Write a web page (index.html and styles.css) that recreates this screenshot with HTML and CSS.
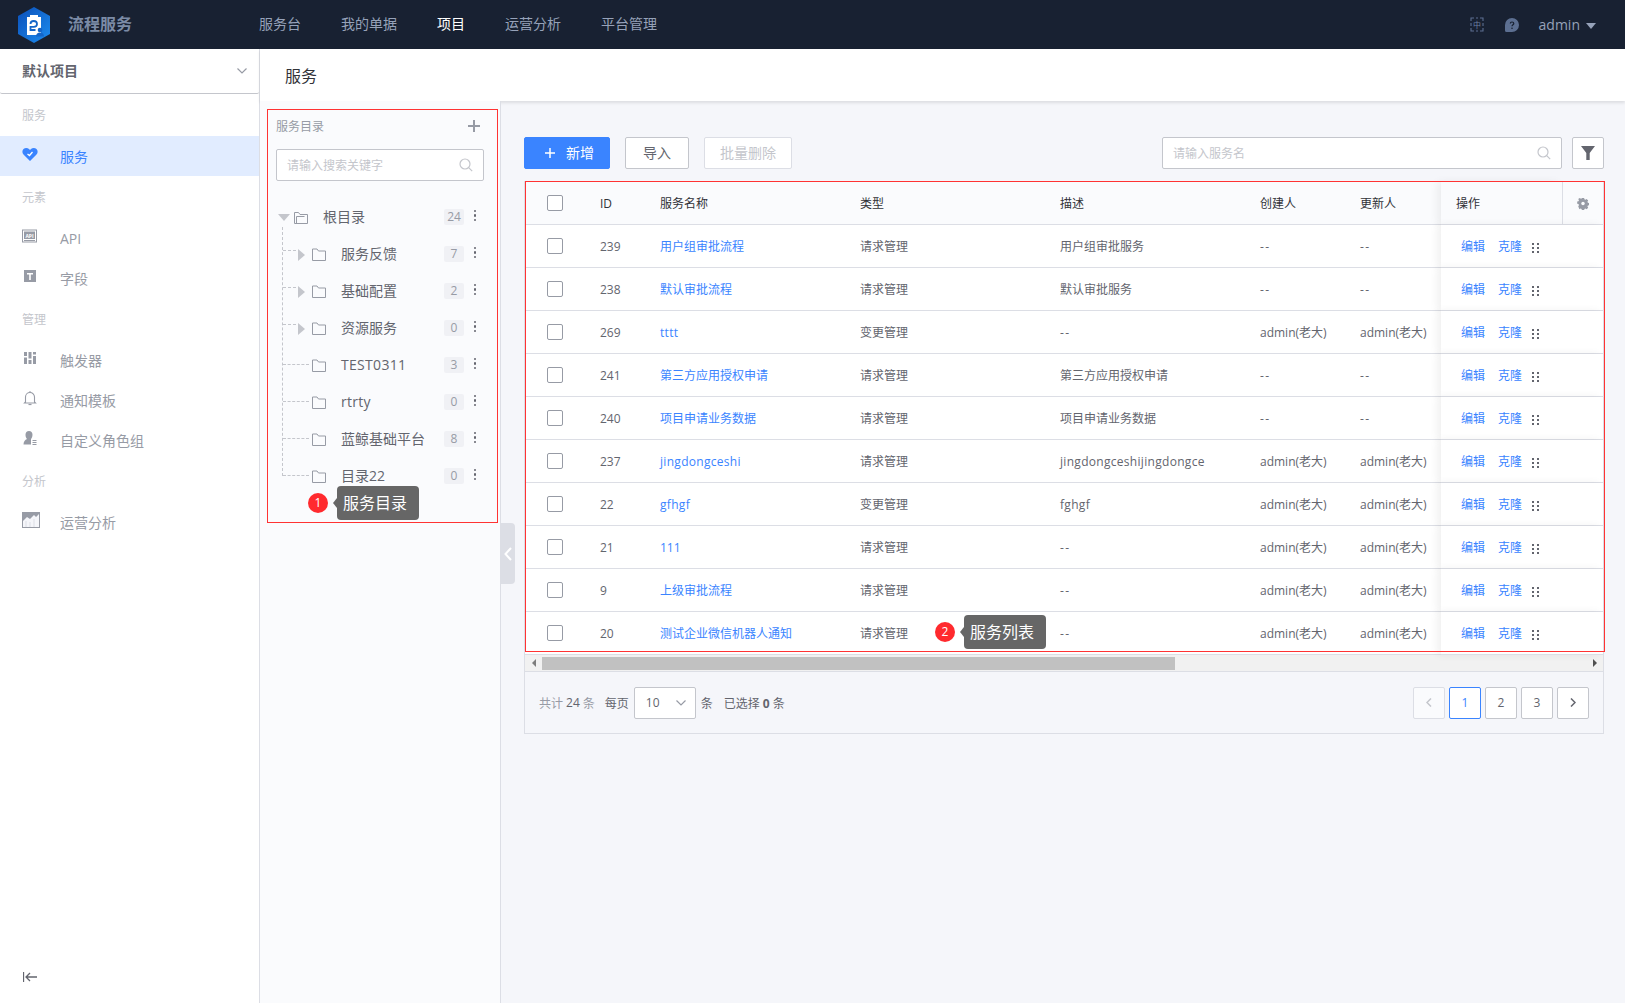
FILE: index.html
```html
<!DOCTYPE html>
<html lang="zh-CN">
<head>
    <meta charset="UTF-8">
    <title>流程服务</title>
    <link rel="stylesheet" href="styles.css">
</head>
<body>

<!-- Top bar -->
<header class="topbar">
    <div class="brand">
        <svg class="brand-logo" viewBox="0 0 32 36">
            <defs>
                <linearGradient id="logo-blue" x1="0" y1="0" x2="1" y2="1">
                    <stop offset="0" stop-color="#0b4fb8"/>
                    <stop offset="1" stop-color="#1d8df0"/>
                </linearGradient>
            </defs>
            <polygon points="16,0 32,9 32,27 16,36 0,27 0,9" fill="url(#logo-blue)"/>
            <path d="M9 10h3V8h8v2h3v18H9z" fill="#fff"/>
            <path d="M12.500 17c0-2 1.400-3 3.200-3s3.300 1 3.300 3-1.500 2.800-3.300 2.800h-3.200v3.200h5" fill="none" stroke="#1465c8" stroke-width="1.800"/>
            <circle cx="22" cy="23" r="2.300" fill="#1465c8"/>
            <path d="M18 29.500c0-2.500 1.800-4 4-4s4 1.500 4 4z" fill="#1465c8"/>
        </svg>
        <span class="brand-name">流程服务</span>
    </div>
    <nav class="topnav">
        <a>服务台</a>
        <a>我的单据</a>
        <a class="active">项目</a>
        <a>运营分析</a>
        <a>平台管理</a>
    </nav>
    <div class="topbar-right">
        <svg class="top-icon lang" viewBox="0 0 14 15">
            <path d="M1 4V1h3M10 1h3v3M1 11v3h3M10 14h3v-3M1 6v3M13 6v3M6 1h2M6 14h2" fill="none" stroke="#5c6f91" stroke-width="1.100"/>
            <text x="7" y="10.500" font-size="8" text-anchor="middle" fill="#6d80a2">中</text>
        </svg>
        <svg class="top-icon help" viewBox="0 0 14 14">
            <path d="M7 0a7 7 0 1 1 0 14H1.500A1.500 1.500 0 0 1 0 12.500V7a7 7 0 0 1 7-7z" fill="#5c6f91"/>
            <path d="M5.300 5.500C5.300 4.500 6 4 7 4s1.800.6 1.800 1.500C8.800 6.800 7 6.800 7 8.300" fill="none" stroke="#182132" stroke-width="1.200"/>
            <circle cx="7" cy="10.200" r=".8" fill="#182132"/>
        </svg>
        <span class="user-name">admin</span>
        <span class="user-caret"></span>
    </div>
</header>

<div class="layout">
    <!-- Left navigation -->
    <aside class="sidebar">
        <div class="project-select">
            <span class="project-name">默认项目</span>
            <svg class="chevron" viewBox="0 0 10 6"><path d="M.5.500 5 5 9.500.500" fill="none" stroke="#979ba5" stroke-width="1.200"/></svg>
        </div>

        <div class="nav-label first">服务</div>
        <a class="nav-item active">
            <svg viewBox="0 0 16 16"><path d="M8 15 1.500 8.500C0 7 0 4.500 1.500 3 3 1.500 5.500 1.500 7 3l1 1 1-1c1.500-1.500 4-1.500 5.500 0s1.500 4 0 5.500z" fill="#3a84ff"/><path d="m5.500 8 2 1.500L10.500 6" fill="none" stroke="#fff" stroke-width="1.300"/></svg>
            <span>服务</span>
        </a>

        <div class="nav-label">元素</div>
        <a class="nav-item">
            <svg viewBox="0 0 16 16"><rect x=".5" y="2" width="14" height="12" fill="none" stroke="#979ba5"/><rect x="2" y="3.500" width="11" height="7.500" fill="#979ba5"/><rect x="2" y="12" width="11" height="1" fill="#979ba5"/><text x="7.500" y="9.500" font-size="5" font-weight="700" text-anchor="middle" fill="#fff">API</text></svg>
            <span>API</span>
        </a>
        <a class="nav-item">
            <svg viewBox="0 0 16 16"><rect x="2" y="2" width="12" height="12" fill="#979ba5"/><path d="M5 5h6v1.500H8.800V12H7.200V6.500H5z" fill="#fff"/></svg>
            <span>字段</span>
        </a>

        <div class="nav-label">管理</div>
        <a class="nav-item">
            <svg viewBox="0 0 16 16"><path d="M2 2h3v4H2zM2 7.500h3V14H2zM6.500 2h3v6.500h-3zM6.500 10h3v4h-3zM11 2h3v2.500h-3zM11 6h3v8h-3z" fill="#979ba5"/></svg>
            <span>触发器</span>
        </a>
        <a class="nav-item">
            <svg viewBox="0 0 16 16"><path d="M3.500 12V7a4.500 4.500 0 0 1 9 0v5l1 1h-11z" fill="none" stroke="#979ba5" stroke-width="1.100"/><path d="M6.500 14.500h3" stroke="#979ba5" stroke-width="1.200"/><path d="M8 1v1.500" stroke="#979ba5"/></svg>
            <span>通知模板</span>
        </a>
        <a class="nav-item">
            <svg viewBox="0 0 16 16"><path d="M7 1c2.200 0 3.500 1.600 3.500 3.800C10.500 7 9.500 8.500 9 9v5.500H1.500c0-3 1.500-4.500 3.500-5.500-.8-.8-1.500-2.200-1.500-4.200C3.500 2.600 4.800 1 7 1z" fill="#979ba5"/><path d="M10.500 10.500h4M10.500 12.500h4M10.500 14.500h4" stroke="#979ba5"/></svg>
            <span>自定义角色组</span>
        </a>

        <div class="nav-label">分析</div>
        <a class="nav-item">
            <svg class="chart-icon" viewBox="0 0 18 16"><rect width="18" height="16" fill="#979ba5"/><path d="M1 15V9l4-4 3 2 4-4 2 2 3-3v13z" fill="#f5f6fa"/><path d="M4 15V9M8 15v-5M12 15V7" stroke="#dcdee5"/></svg>
            <span>运营分析</span>
        </a>

        <svg class="collapse-icon" viewBox="0 0 14 10"><path d="M.5 0v10M14 5H3M7 1 3 5l4 4" fill="none" stroke="#63656e" stroke-width="1.300"/></svg>
    </aside>

    <div class="content">
        <div class="title-bar">服务</div>

        <div class="content-body">
            <!-- Service directory -->
            <section class="dir-panel">
                <div class="dir-box">
                    <div class="dir-title">
                        <span>服务目录</span>
                        <svg class="dir-add" viewBox="0 0 12 12"><path d="M6 0v12M0 6h12" stroke="#979ba5" stroke-width="2"/></svg>
                    </div>
                    <div class="search-box dir-search">
                        <span class="placeholder">请输入搜索关键字</span>
                        <svg class="search-icon" viewBox="0 0 14 14"><circle cx="6" cy="6" r="5" fill="none" stroke="#c4c6cc" stroke-width="1.200"/><path d="m9.700 9.700 3.500 3.500" stroke="#c4c6cc" stroke-width="1.200"/></svg>
                    </div>

                    <div class="tree">
                        <div class="tree-row root">
                            <span class="arrow-down"></span>
                            <svg class="folder" viewBox="0 0 14 13"><path d="M.5 12.500V1.500h4l1.500 2h7.500v9zM2.500 12.500V5.500h8" fill="none" stroke="#979ba5"/></svg>
                            <span class="tree-name">根目录</span>
                            <span class="count">24</span>
                            <span class="more"><i></i><i></i><i></i></span>
                        </div>
                        <div class="tree-children">
                            <div class="tree-row">
                                <span class="arrow-right"></span>
                                <svg class="folder" viewBox="0 0 14 13"><path d="M.5 12.500V1h4.500l1.500 2h7v9.500z" fill="none" stroke="#979ba5"/></svg>
                                <span class="tree-name">服务反馈</span>
                                <span class="count">7</span>
                                <span class="more"><i></i><i></i><i></i></span>
                            </div>
                            <div class="tree-row">
                                <span class="arrow-right"></span>
                                <svg class="folder" viewBox="0 0 14 13"><path d="M.5 12.500V1h4.500l1.500 2h7v9.500z" fill="none" stroke="#979ba5"/></svg>
                                <span class="tree-name">基础配置</span>
                                <span class="count">2</span>
                                <span class="more"><i></i><i></i><i></i></span>
                            </div>
                            <div class="tree-row">
                                <span class="arrow-right"></span>
                                <svg class="folder" viewBox="0 0 14 13"><path d="M.5 12.500V1h4.500l1.500 2h7v9.500z" fill="none" stroke="#979ba5"/></svg>
                                <span class="tree-name">资源服务</span>
                                <span class="count">0</span>
                                <span class="more"><i></i><i></i><i></i></span>
                            </div>
                            <div class="tree-row leaf">
                                <svg class="folder" viewBox="0 0 14 13"><path d="M.5 12.500V1h4.500l1.500 2h7v9.500z" fill="none" stroke="#979ba5"/></svg>
                                <span class="tree-name en">TEST0311</span>
                                <span class="count">3</span>
                                <span class="more"><i></i><i></i><i></i></span>
                            </div>
                            <div class="tree-row leaf">
                                <svg class="folder" viewBox="0 0 14 13"><path d="M.5 12.500V1h4.500l1.500 2h7v9.500z" fill="none" stroke="#979ba5"/></svg>
                                <span class="tree-name en">rtrty</span>
                                <span class="count">0</span>
                                <span class="more"><i></i><i></i><i></i></span>
                            </div>
                            <div class="tree-row leaf">
                                <svg class="folder" viewBox="0 0 14 13"><path d="M.5 12.500V1h4.500l1.500 2h7v9.500z" fill="none" stroke="#979ba5"/></svg>
                                <span class="tree-name">蓝鲸基础平台</span>
                                <span class="count">8</span>
                                <span class="more"><i></i><i></i><i></i></span>
                            </div>
                            <div class="tree-row leaf">
                                <svg class="folder" viewBox="0 0 14 13"><path d="M.5 12.500V1h4.500l1.500 2h7v9.500z" fill="none" stroke="#979ba5"/></svg>
                                <span class="tree-name">目录22</span>
                                <span class="count">0</span>
                                <span class="more"><i></i><i></i><i></i></span>
                            </div>
                        </div>
                    </div>

                    <div class="guide guide-dir">
                        <span class="guide-num">1</span>
                        <span class="guide-tip">服务目录</span>
                    </div>
                </div>
                <div class="panel-toggle">
                    <svg viewBox="0 0 8 14"><path d="M7 1 1.500 7 7 13" fill="none" stroke="#fff" stroke-width="2"/></svg>
                </div>
            </section>

            <!-- Service list -->
            <section class="main">
                <div class="toolbar">
                    <button class="btn btn-primary">
                        <svg viewBox="0 0 12 12"><path d="M6 1v10M1 6h10" stroke="#fff" stroke-width="1.500"/></svg>
                        <span>新增</span>
                    </button>
                    <button class="btn"><span>导入</span></button>
                    <button class="btn btn-disabled"><span>批量删除</span></button>
                    <div class="search-box list-search">
                        <span class="placeholder">请输入服务名</span>
                        <svg class="search-icon" viewBox="0 0 14 14"><circle cx="6" cy="6" r="5" fill="none" stroke="#c4c6cc" stroke-width="1.200"/><path d="m9.700 9.700 3.500 3.500" stroke="#c4c6cc" stroke-width="1.200"/></svg>
                    </div>
                    <button class="btn-filter">
                        <svg viewBox="0 0 14 14"><path d="M0 0h14L8.700 7v7H5.300V7z" fill="#63656e"/></svg>
                    </button>
                </div>

                <div class="table-card">
                    <table class="service-table">
                        <colgroup>
                            <col class="col-check"><col class="col-id"><col class="col-name"><col class="col-type"><col class="col-desc"><col class="col-creator"><col class="col-updater"><col class="col-op"><col class="col-set">
                        </colgroup>
                        <thead>
                            <tr>
                                <th class="check-cell"><span class="checkbox"></span></th>
                                <th>ID</th>
                                <th>服务名称</th>
                                <th>类型</th>
                                <th>描述</th>
                                <th>创建人</th>
                                <th>更新人</th>
                                <th class="op-head">操作</th>
                                <th class="set-head">
                                    <svg viewBox="0 0 14 14"><path d="M5.500 0h3l.4 1.800 1.400.6 1.600-1 2.100 2.100-1 1.600.6 1.400 1.800.4v3l-1.800.4-.6 1.400 1 1.600-2.100 2.100-1.600-1-1.400.6-.4 1.800h-3l-.4-1.800-1.400-.6-1.600 1L.5 11.300l1-1.600-.6-1.400L-.9 7.900v-3l1.800-.4.600-1.400-1-1.600L2.600 0l1.600 1 1.400-.6z" transform="translate(1 0) scale(.86)" fill="#979ba5"/><circle cx="7" cy="6.500" r="2" fill="#fafbfd"/></svg>
                                </th>
                            </tr>
                        </thead>
                        <tbody>
                            <tr>
                                <td class="check-cell"><span class="checkbox"></span></td>
                                <td>239</td><td><a class="link">用户组审批流程</a></td><td>请求管理</td><td>用户组审批服务</td><td><span class="dash">--</span></td><td><span class="dash">--</span></td>
                                <td class="op-cell" colspan="2"><a class="link">编辑</a><a class="link">克隆</a><span class="grip"><i></i><i></i><i></i><i></i><i></i><i></i></span></td>
                            </tr>
                            <tr>
                                <td class="check-cell"><span class="checkbox"></span></td>
                                <td>238</td><td><a class="link">默认审批流程</a></td><td>请求管理</td><td>默认审批服务</td><td><span class="dash">--</span></td><td><span class="dash">--</span></td>
                                <td class="op-cell" colspan="2"><a class="link">编辑</a><a class="link">克隆</a><span class="grip"><i></i><i></i><i></i><i></i><i></i><i></i></span></td>
                            </tr>
                            <tr>
                                <td class="check-cell"><span class="checkbox"></span></td>
                                <td>269</td><td><a class="link en">tttt</a></td><td>变更管理</td><td><span class="dash">--</span></td><td>admin(老大)</td><td>admin(老大)</td>
                                <td class="op-cell" colspan="2"><a class="link">编辑</a><a class="link">克隆</a><span class="grip"><i></i><i></i><i></i><i></i><i></i><i></i></span></td>
                            </tr>
                            <tr>
                                <td class="check-cell"><span class="checkbox"></span></td>
                                <td>241</td><td><a class="link">第三方应用授权申请</a></td><td>请求管理</td><td>第三方应用授权申请</td><td><span class="dash">--</span></td><td><span class="dash">--</span></td>
                                <td class="op-cell" colspan="2"><a class="link">编辑</a><a class="link">克隆</a><span class="grip"><i></i><i></i><i></i><i></i><i></i><i></i></span></td>
                            </tr>
                            <tr>
                                <td class="check-cell"><span class="checkbox"></span></td>
                                <td>240</td><td><a class="link">项目申请业务数据</a></td><td>请求管理</td><td>项目申请业务数据</td><td><span class="dash">--</span></td><td><span class="dash">--</span></td>
                                <td class="op-cell" colspan="2"><a class="link">编辑</a><a class="link">克隆</a><span class="grip"><i></i><i></i><i></i><i></i><i></i><i></i></span></td>
                            </tr>
                            <tr>
                                <td class="check-cell"><span class="checkbox"></span></td>
                                <td>237</td><td><a class="link en">jingdongceshi</a></td><td>请求管理</td><td class="en">jingdongceshijingdongce</td><td>admin(老大)</td><td>admin(老大)</td>
                                <td class="op-cell" colspan="2"><a class="link">编辑</a><a class="link">克隆</a><span class="grip"><i></i><i></i><i></i><i></i><i></i><i></i></span></td>
                            </tr>
                            <tr>
                                <td class="check-cell"><span class="checkbox"></span></td>
                                <td>22</td><td><a class="link en">gfhgf</a></td><td>变更管理</td><td class="en">fghgf</td><td>admin(老大)</td><td>admin(老大)</td>
                                <td class="op-cell" colspan="2"><a class="link">编辑</a><a class="link">克隆</a><span class="grip"><i></i><i></i><i></i><i></i><i></i><i></i></span></td>
                            </tr>
                            <tr>
                                <td class="check-cell"><span class="checkbox"></span></td>
                                <td>21</td><td><a class="link">111</a></td><td>请求管理</td><td><span class="dash">--</span></td><td>admin(老大)</td><td>admin(老大)</td>
                                <td class="op-cell" colspan="2"><a class="link">编辑</a><a class="link">克隆</a><span class="grip"><i></i><i></i><i></i><i></i><i></i><i></i></span></td>
                            </tr>
                            <tr>
                                <td class="check-cell"><span class="checkbox"></span></td>
                                <td>9</td><td><a class="link">上级审批流程</a></td><td>请求管理</td><td><span class="dash">--</span></td><td>admin(老大)</td><td>admin(老大)</td>
                                <td class="op-cell" colspan="2"><a class="link">编辑</a><a class="link">克隆</a><span class="grip"><i></i><i></i><i></i><i></i><i></i><i></i></span></td>
                            </tr>
                            <tr>
                                <td class="check-cell"><span class="checkbox"></span></td>
                                <td>20</td><td><a class="link">测试企业微信机器人通知</a></td><td>请求管理</td><td><span class="dash">--</span></td><td>admin(老大)</td><td>admin(老大)</td>
                                <td class="op-cell" colspan="2"><a class="link">编辑</a><a class="link">克隆</a><span class="grip"><i></i><i></i><i></i><i></i><i></i><i></i></span></td>
                            </tr>
                        </tbody>
                    </table>

                    <div class="fake-scroll">
                        <span class="scroll-btn"><i class="tri-left"></i></span>
                        <span class="scroll-track"><span class="scroll-thumb"></span></span>
                        <span class="scroll-btn"><i class="tri-right"></i></span>
                    </div>

                    <div class="pager-bar">
                        <span class="muted">共计</span><span class="num">24</span><span class="muted">条</span>
                        <span class="per-page">每页</span>
                        <div class="page-size">
                            <span>10</span>
                            <svg class="chevron" viewBox="0 0 10 6"><path d="M.5.500 5 5 9.500.500" fill="none" stroke="#979ba5" stroke-width="1.200"/></svg>
                        </div>
                        <span>条</span>
                        <span class="selected">已选择<b>0</b>条</span>
                        <div class="pager">
                            <span class="page-btn disabled"><svg viewBox="0 0 6 9"><path d="M5 .5 1 4.500l4 4" fill="none" stroke="#c4c6cc" stroke-width="1.500"/></svg></span>
                            <span class="page-btn current">1</span>
                            <span class="page-btn">2</span>
                            <span class="page-btn">3</span>
                            <span class="page-btn"><svg viewBox="0 0 6 9"><path d="m1 .5 4 4-4 4" fill="none" stroke="#63656e" stroke-width="1.500"/></svg></span>
                        </div>
                    </div>

                    <div class="table-outline"></div>
                    <div class="guide guide-list">
                        <span class="guide-num">2</span>
                        <span class="guide-tip">服务列表</span>
                    </div>
                </div>
            </section>
        </div>
    </div>
</div>

</body>
</html>
```

FILE: styles.css
```css
/* General */
* {
    box-sizing: border-box;
}

html,
body {
    height: 100%;
}

body {
    margin: 0;
    overflow: hidden;
    font-family: "Open Sans", "Noto Sans CJK SC", sans-serif;
    font-size: 12px;
    color: #63656e;
    background-color: #fff;
}

/* Latin strings run a little wider in the design than in Open Sans */
.en {
    letter-spacing: 0.3px;
}

.dash {
    letter-spacing: 1.5px;
}

/* Top bar */
.topbar {
    display: flex;
    align-items: center;
    height: 49px;
    background-color: #182132;
    color: #96a2b9;
}

.brand {
    display: flex;
    align-items: center;
    width: 259px;
    padding-left: 18px;
}

.brand-logo {
    width: 32px;
    height: 36px;
}

.brand-name {
    margin-left: 18px;
    margin-bottom: 4px;
    font-size: 16px;
    font-weight: 700;
    color: #7b8ba6;
}

.topnav {
    display: flex;
    gap: 40px;
    padding-bottom: 4px;
    font-size: 14px;
}

.topnav .active {
    color: #fff;
}

.topbar-right {
    display: flex;
    align-items: center;
    margin-left: auto;
    padding-right: 29px;
}

.top-icon {
    width: 14px;
    height: 14px;
}

.top-icon.lang {
    height: 15px;
}

.top-icon.help {
    margin-left: 21px;
}

.user-name {
    margin-left: 20px;
    font-size: 14px;
}

.user-caret {
    width: 0;
    height: 0;
    margin-left: 6px;
    margin-top: 2px;
    border-left: 5px solid transparent;
    border-right: 5px solid transparent;
    border-top: 6px solid #96a2b9;
}

/* Layout */
.layout {
    display: flex;
    height: calc(100% - 49px);
}

.sidebar {
    position: relative;
    flex: 0 0 260px;
    background-color: #fff;
    border-right: 1px solid #dcdee5;
}

.project-select {
    display: flex;
    align-items: center;
    justify-content: space-between;
    height: 45px;
    padding: 0 12px 0 22px;
    border-bottom: 1px solid #c4c6cc;
    border-radius: 0 0 2px 2px;
}

.project-name {
    padding-bottom: 3px;
    font-size: 14px;
    font-weight: 700;
}

.chevron {
    width: 10px;
    height: 6px;
}

.nav-label {
    display: flex;
    align-items: center;
    height: 42px;
    padding-left: 22px;
    color: #c4c6cc;
}

.nav-item {
    display: flex;
    align-items: center;
    height: 40px;
    padding-left: 22px;
    font-size: 14px;
    color: #979ba5;
}

.nav-item svg {
    flex: 0 0 16px;
    width: 16px;
    height: 16px;
    margin-right: 22px;
    margin-top: -4px;
}

.nav-item svg.chart-icon {
    flex-basis: 18px;
    width: 18px;
    margin-right: 20px;
}

.nav-item.active {
    background-color: #e1ecff;
    color: #3a84ff;
}

.collapse-icon {
    position: absolute;
    left: 23px;
    bottom: 21px;
    width: 14px;
    height: 10px;
}

/* Content */
.content {
    flex: 1;
    min-width: 0;
    display: flex;
    flex-direction: column;
    background-color: #f5f6fa;
}

.title-bar {
    position: relative;
    display: flex;
    align-items: center;
    height: 52px;
    padding-left: 25px;
    font-size: 16px;
    color: #313238;
    background-color: #fff;
    box-shadow: 0 2px 3px rgba(0, 0, 0, 0.1);
}

.content-body {
    flex: 1;
    display: flex;
    min-height: 0;
}

/* Service directory */
.dir-panel {
    position: relative;
    flex: 0 0 241px;
    padding: 8px 2px 0 7px;
    background-color: #fafbfd;
    border-right: 1px solid #dcdee5;
}

.dir-box {
    position: relative;
    height: 414px;
    border: 1px solid #ff3333;
}

.dir-title {
    display: flex;
    align-items: center;
    justify-content: space-between;
    height: 31px;
    padding: 0 17px 0 8px;
    margin-bottom: 8px;
    color: #979ba5;
}

.dir-add {
    width: 12px;
    height: 12px;
}

.search-box {
    display: flex;
    align-items: center;
    justify-content: space-between;
    height: 32px;
    padding: 0 10px;
    background-color: #fff;
    border: 1px solid #c4c6cc;
    border-radius: 2px;
}

.dir-search {
    width: 208px;
    margin-left: 8px;
}

.placeholder {
    color: #c4c6cc;
}

.search-icon {
    width: 14px;
    height: 14px;
}

.tree {
    margin-top: 17px;
    padding-right: 11px;
}

.tree-row {
    display: flex;
    align-items: center;
    height: 37px;
    font-size: 14px;
    padding-left: 30px;
}

.tree-row.root {
    padding-left: 10px;
}

.tree-row.leaf {
    padding-left: 44px;
}

.arrow-down {
    width: 0;
    height: 0;
    border-left: 6px solid transparent;
    border-right: 6px solid transparent;
    border-top: 7px solid #c4c6cc;
    margin-right: 4px;
    margin-top: 2px;
}

.arrow-right {
    width: 0;
    height: 0;
    margin-top: 2px;
    border-top: 6px solid transparent;
    border-bottom: 6px solid transparent;
    border-left: 7px solid #c4c6cc;
    margin-right: 7px;
}

.folder {
    flex: 0 0 14px;
    width: 14px;
    height: 13px;
    margin-top: 2px;
    margin-right: 15px;
}

.tree-name {
    flex: 1;
    margin-top: -1px;
}

.count {
    width: 20px;
    height: 16px;
    line-height: 16px;
    text-align: center;
    font-size: 12px;
    color: #979ba5;
    background-color: #f0f1f5;
    border-radius: 2px;
}

.more {
    display: flex;
    flex-direction: column;
    align-items: center;
    gap: 2px;
    width: 22px;
    margin-top: -2px;
}

.more i {
    width: 2.5px;
    height: 2.5px;
    border-radius: 50%;
    background-color: #63656e;
}

/* Dashed connectors of the tree */
.tree-children {
    position: relative;
}

.tree-children::before {
    content: "";
    position: absolute;
    left: 14px;
    top: -8px;
    bottom: 18px;
    border-left: 1px dashed #c4c6cc;
}

.tree-children .tree-row {
    position: relative;
}

.tree-children .tree-row::before {
    content: "";
    position: absolute;
    left: 15px;
    top: 15px;
    width: 13px;
    border-top: 1px dashed #c4c6cc;
}

.tree-children .tree-row.leaf::before {
    top: 18px;
    width: 26px;
}

.panel-toggle {
    position: absolute;
    top: 422px;
    right: -15px;
    display: flex;
    align-items: center;
    justify-content: center;
    width: 14px;
    height: 61px;
    background-color: #dcdee5;
    border-radius: 0 4px 4px 0;
    z-index: 1;
}

.panel-toggle svg {
    width: 8px;
    height: 14px;
}

/* Guide markers */
.guide {
    position: absolute;
    display: flex;
    align-items: center;
    z-index: 3;
}

.guide-dir {
    left: 40px;
    top: 376px;
}

.guide-list {
    left: 410px;
    top: 433px;
}

.guide-num {
    width: 20px;
    height: 20px;
    line-height: 20px;
    text-align: center;
    font-size: 12px;
    color: #fff;
    background-color: #ff2a2e;
    border-radius: 50%;
}

.guide-tip {
    position: relative;
    height: 34px;
    line-height: 34px;
    margin-left: 9px;
    padding: 0 12px 0 6px;
    font-size: 16px;
    color: #fff;
    background-color: #666;
    border-radius: 4px;
}

.guide-tip::before {
    content: "";
    position: absolute;
    left: -4px;
    top: 12px;
    border-top: 5px solid transparent;
    border-bottom: 5px solid transparent;
    border-right: 4px solid #666;
}

/* Service list */
.main {
    flex: 1;
    min-width: 0;
    padding: 36px 21px 0 23px;
}

.toolbar {
    display: flex;
    align-items: center;
    height: 32px;
    margin-bottom: 12px;
}

.btn {
    display: flex;
    align-items: center;
    justify-content: center;
    height: 32px;
    width: 64px;
    margin-right: 15px;
    padding: 0;
    font: inherit;
    font-size: 14px;
    color: #63656e;
    background-color: #fff;
    border: 1px solid #c4c6cc;
    border-radius: 2px;
}

.btn span {
    margin-top: -2px;
}

.btn-primary {
    width: 86px;
    padding-left: 4px;
    color: #fff;
    background-color: #3a84ff;
    border-color: #3a84ff;
}

.btn-primary svg {
    width: 12px;
    height: 12px;
    margin-right: 10px;
}

.btn-disabled {
    width: 88px;
    color: #c4c6cc;
    border-color: #dcdee5;
}

.list-search {
    width: 400px;
    margin-left: auto;
}

.btn-filter {
    display: flex;
    align-items: center;
    justify-content: center;
    width: 32px;
    height: 32px;
    margin-left: 10px;
    padding: 0;
    background-color: #fff;
    border: 1px solid #c4c6cc;
    border-radius: 2px;
}

.btn-filter svg {
    width: 14px;
    height: 14px;
}

.table-card {
    position: relative;
    width: 1080px;
    border: 1px solid #dcdee5;
    background-color: #fff;
}

.service-table {
    width: 1078px;
    table-layout: fixed;
    border-collapse: separate;
    border-spacing: 0;
}

.col-check { width: 65px; }
.col-id { width: 60px; }
.col-name { width: 200px; }
.col-type { width: 200px; }
.col-desc { width: 200px; }
.col-creator { width: 100px; }
.col-updater { width: 91px; }
.col-op { width: 121px; }
.col-set { width: 41px; }

.service-table th,
.service-table td {
    height: 43px;
    padding: 0 0 0 10px;
    text-align: left;
    font-weight: 400;
    white-space: nowrap;
    overflow: hidden;
    border-bottom: 1px solid #dcdee5;
}

.service-table th {
    color: #313238;
    background-color: #fafbfd;
}

.service-table th.check-cell,
.service-table td.check-cell {
    padding-left: 22px;
}

.checkbox {
    display: block;
    width: 16px;
    height: 16px;
    background-color: #fff;
    border: 1px solid #979ba5;
    border-radius: 2px;
}

.link {
    color: #3a84ff;
}

.op-head,
.op-cell {
    position: relative;
    box-shadow: -4px 0 8px rgba(0, 0, 0, 0.06);
    background-color: #fff;
}

.service-table th.op-head {
    padding-left: 15px;
    background-color: #fafbfd;
}

.service-table td.op-cell {
    padding-left: 20px;
    overflow: visible;
}

.op-cell .link {
    margin-right: 13px;
}

.service-table th.set-head {
    position: relative;
    padding: 0;
    text-align: center;
    border-left: 1px solid #dcdee5;
}

.set-head svg {
    display: inline-block;
    width: 12px;
    height: 12px;
    vertical-align: middle;
}

.grip {
    display: inline-grid;
    grid-template-columns: 2px 2px;
    gap: 2px 3px;
    vertical-align: middle;
    margin-left: -3px;
}

.grip i {
    width: 2px;
    height: 2px;
    background-color: #63656e;
}

/* Horizontal scroll bar */
.fake-scroll {
    display: flex;
    height: 16px;
    background-color: #f1f1f1;
}

.scroll-btn {
    display: flex;
    align-items: center;
    justify-content: center;
    flex: 0 0 17px;
}

.tri-left {
    border-top: 4px solid transparent;
    border-bottom: 4px solid transparent;
    border-right: 4px solid #7d7d7d;
}

.tri-right {
    border-top: 4px solid transparent;
    border-bottom: 4px solid transparent;
    border-left: 4px solid #505050;
}

.scroll-track {
    flex: 1;
    padding: 2px 0 1px;
}

.scroll-thumb {
    display: block;
    width: 633px;
    height: 13px;
    background-color: #c1c1c1;
}

/* Pagination */
.pager-bar {
    display: flex;
    align-items: center;
    height: 62px;
    padding: 0 14px;
    background-color: #f5f6fa;
    border-top: 1px solid #dcdee5;
}

.muted {
    color: #979ba5;
}

.num {
    margin: 0 3px;
}

.per-page {
    margin-left: 10px;
}

.page-size {
    display: flex;
    align-items: center;
    justify-content: space-between;
    width: 62px;
    height: 32px;
    margin: 0 5px;
    padding: 0 9px 0 11px;
    background-color: #fff;
    border: 1px solid #c4c6cc;
    border-radius: 2px;
}

.selected {
    margin-left: 11px;
}

.selected b {
    margin: 0 3px;
}

.pager {
    display: flex;
    gap: 4px;
    margin-left: auto;
}

.page-btn {
    display: flex;
    align-items: center;
    justify-content: center;
    width: 32px;
    height: 32px;
    background-color: #fff;
    border: 1px solid #c4c6cc;
    border-radius: 2px;
}

.page-btn svg {
    width: 6px;
    height: 9px;
}

.page-btn.disabled {
    background-color: #fafbfd;
    border-color: #dcdee5;
}

.page-btn.current {
    color: #3a84ff;
    border-color: #3a84ff;
}

/* Red annotation frame over the table */
.table-outline {
    position: absolute;
    left: 0;
    top: -1px;
    width: 1080px;
    height: 471px;
    border: 1px solid #ff3333;
    pointer-events: none;
    z-index: 2;
}
```
